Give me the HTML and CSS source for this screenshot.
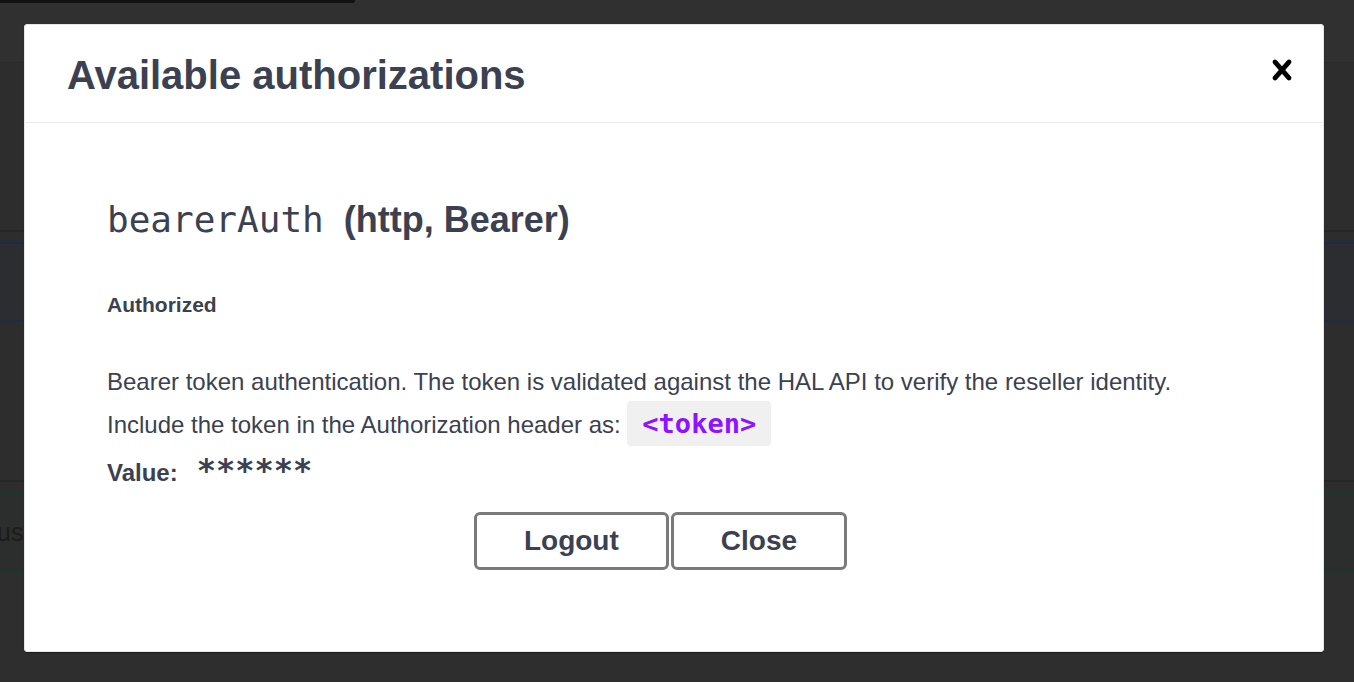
FILE: index.html
```html
<!DOCTYPE html>
<html lang="en">
<head>
<meta charset="utf-8">
<title>Available authorizations</title>
<link rel="stylesheet" href="styles.css">
</head>
<body>
<div class="page">
  <div class="topbar"><div class="dropdown-edge"></div></div>
  <div class="section"></div>
  <div class="divider"></div>
  <div class="spacer"></div>
  <div class="opblock opblock-get"></div>
  <div class="section section-mid"></div>
  <div class="divider"></div>
  <div class="spacer"></div>
  <div class="opblock opblock-post"><span class="op-text">us</span></div>
  <div class="section section-end"></div>
</div>

<div class="modal" role="dialog" aria-labelledby="modal-title">
  <div class="modal-header">
    <h3 id="modal-title" class="modal-title">Available authorizations</h3>
    <button class="close-btn" aria-label="Close">
      <svg width="20" height="20" viewBox="5 5 10 10" aria-hidden="true"><path fill="#000" d="M14.348 14.849c-.469.469-1.229.469-1.697 0L10 11.819l-2.651 3.029c-.469.469-1.229.469-1.697 0-.469-.469-.469-1.229 0-1.697l2.758-3.150-2.759-3.152c-.469-.469-.469-1.228 0-1.697.469-.469 1.228-.469 1.697 0L10 8.183l2.651-3.031c.469-.469 1.228-.469 1.697 0 .469.469.469 1.229 0 1.697l-2.758 3.152 2.758 3.150c.469.469.469 1.229 0 1.698z"/></svg>
    </button>
  </div>
  <div class="modal-body">
    <h4 class="scheme"><code class="scheme-name">bearerAuth</code>&nbsp; (http, Bearer)</h4>
    <h6 class="status">Authorized</h6>
    <p class="desc">Bearer token authentication. The token is validated against the HAL API to verify the reseller identity.<br>Include the token in the Authorization header as: <code class="token">&lt;token&gt;</code></p>
    <div class="value-row"><span class="value-label">Value:</span><code class="value-mask">******</code></div>
    <div class="btn-row">
      <button class="btn">Logout</button>
      <button class="btn btn-done">Close</button>
    </div>
  </div>
</div>
</body>
</html>
```

FILE: styles.css
```css
html, body {
  margin: 0;
  padding: 0;
}
body {
  width: 1354px;
  height: 682px;
  overflow: hidden;
  background: #2e2e2e;
  font-family: "Liberation Sans", Arial, sans-serif;
  position: relative;
}

/* dimmed page behind the backdrop */
.page {
  display: flex;
  flex-direction: column;
}
.topbar {
  height: 62px;
  background: #303030;
  border-bottom: 1px solid #2a2a2a;
}
.dropdown-edge {
  width: 355px;
  height: 3px;
  background: #121212;
  border-radius: 0 0 5px 0;
}
.section {
  height: 167px;
  background: #2d2d2d;
}
.section-mid {
  height: 158px;
}
.section-end {
  height: 110px;
  background: #2e2e2e;
}
.divider {
  height: 2px;
  background: #262626;
}
.spacer {
  height: 10px;
  background: #2d2d2d;
}
.opblock {
  height: 76px;
  display: flex;
  align-items: center;
}
.opblock-get {
  background: #2c2d31;
  border-top: 2px solid #1c2b46;
  border-bottom: 2px solid #1c2b46;
}
.opblock-post {
  background: #2b2e2c;
  border-top: 2px solid #153a2b;
  border-bottom: 2px solid #153a2b;
}
.op-text {
  font-size: 25px;
  color: #1c1c1c;
  text-indent: -3px;
  display: block;
}

/* modal */
.modal {
  position: absolute;
  left: 24px;
  top: 24px;
  width: 1300px;
  background: #fff;
  border-radius: 4px;
  box-shadow: inset 0 0 0 1px #e6e6e6, 0 1px 1px rgba(0, 0, 0, 0.4);
  color: #3b4151;
}
.modal-header {
  display: flex;
  justify-content: space-between;
  align-items: flex-start;
  padding: 31px 32px 27px 43px;
  border-bottom: 1px solid #ebebeb;
}
.modal-title {
  margin: 0;
  font-size: 40px;
  line-height: 40px;
  font-weight: 700;
  color: #3b4151;
}
.close-btn {
  margin-top: 5px;
  padding: 0;
  border: 0;
  background: none;
  width: 20px;
  height: 20px;
  display: block;
}
.close-btn svg {
  display: block;
  overflow: visible;
}

.modal-body {
  padding: 75px 40px 82px 83px;
}
.scheme {
  margin: 0;
  font-size: 36px;
  line-height: 44px;
  font-weight: 700;
}
.scheme-name {
  font-family: "DejaVu Sans Mono", monospace;
  font-weight: 400;
  font-size: 36px;
}
.status {
  margin: 51px 0 0;
  font-size: 21px;
  line-height: 24px;
  font-weight: 700;
}
.desc {
  margin: 44px 0 0;
  font-size: 24px;
  line-height: 42px;
}
.token {
  font-family: "DejaVu Sans Mono", monospace;
  font-weight: 700;
  font-size: 27px;
  color: #9012fe;
  background: #f0f0f0;
  padding: 7px 15px;
  border-radius: 4px;
}
.value-row {
  margin-top: 9px;
  font-size: 24px;
  line-height: 30px;
}
.value-label {
  font-weight: 700;
}
.value-mask {
  font-family: "DejaVu Sans Mono", monospace;
  font-weight: 700;
  font-size: 32px;
  line-height: 30px;
  margin-left: 19px;
}
.btn-row {
  margin-top: 24px;
  display: flex;
  justify-content: center;
  gap: 2px;
  margin-left: -83px;
  margin-right: -40px;
}
.btn {
  font-family: "Liberation Sans", Arial, sans-serif;
  font-size: 28px;
  font-weight: 700;
  line-height: 52px;
  padding: 0 47px;
  color: #3b4151;
  background: #fff;
  border: 3px solid #7a7a7a;
  border-radius: 6px;
}
.btn-done {
  margin-right: 27px;
}
```
